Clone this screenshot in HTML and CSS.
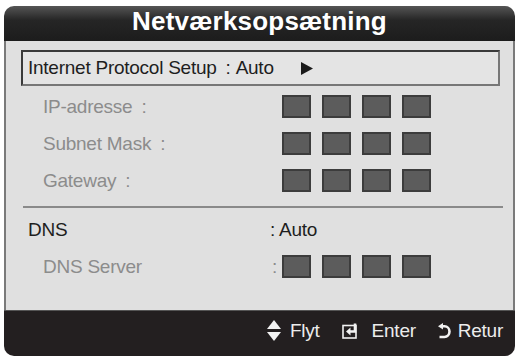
FILE: index.html
```html
<!DOCTYPE html>
<html lang="da">
<head>
    <meta charset="UTF-8">
    <meta name="viewport" content="width=device-width, initial-scale=1.0">
    <title>Netværksopsætning</title>
    <link rel="stylesheet" href="styles.css">
</head>
<body>
    <div class="panel">
        <div class="title">Netværksopsætning</div>

        <div class="content">
            <div class="setup-row">
                <span>Internet Protocol Setup</span>
                <span class="colon">:</span>
                <span class="value">Auto</span>
                <svg class="arrow" width="14" height="13" viewBox="0 0 14 13"><polygon points="1,0 13,6.5 1,13" fill="#1a1a1a"/></svg>
            </div>

            <div class="row disabled first">
                <span class="label ip-label">IP-adresse<span class="colon">:</span></span>
                <div class="boxes"><i></i><i></i><i></i><i></i></div>
            </div>
            <div class="row disabled">
                <span class="label ip-label">Subnet Mask<span class="colon">:</span></span>
                <div class="boxes"><i></i><i></i><i></i><i></i></div>
            </div>
            <div class="row disabled">
                <span class="label ip-label">Gateway<span class="colon">:</span></span>
                <div class="boxes"><i></i><i></i><i></i><i></i></div>
            </div>

            <div class="divider"></div>

            <div class="row dns">
                <span class="label dns-label">DNS</span>
                <span>: Auto</span>
            </div>
            <div class="row disabled">
                <span class="label server-label">DNS Server</span>
                <span class="server-colon">:</span>
                <div class="boxes"><i></i><i></i><i></i><i></i></div>
            </div>
        </div>

        <div class="footer">
            <div class="hint">
                <svg width="14" height="21" viewBox="0 0 14 21"><polygon points="7,0 14,9 0,9" fill="#f2f2f2"/><polygon points="0,12 14,12 7,21" fill="#f2f2f2"/></svg>
                <span class="hint-text flyt">Flyt</span>
            </div>
            <div class="hint">
                <svg width="16" height="16" viewBox="0 0 16 16"><rect x="1" y="2.5" width="13" height="12.5" fill="none" stroke="#f2f2f2" stroke-width="1.6"/><path d="M13 0.5 V8.5 H8" fill="none" stroke="#f2f2f2" stroke-width="2.6"/><polygon points="4,8.5 8.5,4.5 8.5,12.5" fill="#f2f2f2"/></svg>
                <span class="hint-text enter">Enter</span>
            </div>
            <div class="hint">
                <svg width="13" height="16" viewBox="0 0 13 16"><path d="M4 3.2 H6.5 A5 5.4 0 0 1 6.5 14 H1.5" fill="none" stroke="#f2f2f2" stroke-width="2.6"/><polygon points="0,3.2 5,0 5,6.4" fill="#f2f2f2"/></svg>
                <span class="hint-text retur">Retur</span>
            </div>
        </div>
    </div>
</body>
</html>
```

FILE: styles.css
```css
body {
    margin: 0;
    background: #ffffff;
    font-family: "Liberation Sans", Arial, sans-serif;
}
.panel {
    width: 511px;
    height: 350px;
    margin: 6px 0 0 4px;
    border-radius: 10px;
    overflow: hidden;
    display: flex;
    flex-direction: column;
}
.title {
    height: 35px;
    box-sizing: border-box;
    padding-bottom: 4px;
    background: linear-gradient(to bottom, #555 0%, #262626 40%, #1c1c1c 100%);
    color: #fff;
    font-size: 26px;
    font-weight: bold;
    letter-spacing: 0.2px;
    text-align: center;
    line-height: 31px;
}
.content {
    flex: 1;
    background: #e0e0e0;
    border-left: 2px solid #7a7a7a;
    border-right: 2px solid #7a7a7a;
    font-size: 19px;
    letter-spacing: -0.25px;
    color: #1e1e1e;
}
.setup-row {
    height: 36px;
    box-sizing: border-box;
    margin: 9px 13px 0 15px;
    border: 2px solid #3a3a3a;
    border-right-color: #777;
    border-bottom-color: #777;
    padding-left: 5px;
    display: flex;
    align-items: center;
    background: #e4e4e4;
}
.setup-row .colon {
    margin: 0 5px 0 9px;
}
.setup-row .value {
    margin-right: 26px;
}
.row {
    height: 37px;
    display: flex;
    align-items: center;
    padding-left: 37px;
}
.row.first {
    margin-top: 2px;
}
.disabled {
    color: #8c8c8c;
}
.label .colon {
    margin-left: 9px;
}
.ip-label {
    width: 239px;
}
.dns {
    padding-left: 22px;
    color: #1e1e1e;
}
.dns-label {
    width: 242px;
}
.server-label {
    width: 229px;
}
.server-colon {
    width: 10px;
}
.boxes {
    display: flex;
    gap: 11px;
}
.boxes i {
    width: 29px;
    height: 23px;
    box-sizing: border-box;
    background: #5c5c5c;
    border: 2px solid #3c3c3c;
}
.divider {
    height: 2px;
    margin: 7px 10px 3px 17px;
    background: #8a8a8a;
}
.footer {
    height: 46px;
    box-sizing: border-box;
    background: #231f20;
    border-top: 1px solid #555;
    display: flex;
    justify-content: flex-end;
    align-items: center;
    padding: 0 12px 6px 0;
    color: #ececec;
    font-size: 19px;
    letter-spacing: -0.25px;
    gap: 22px;
}
.hint {
    display: flex;
    align-items: center;
}
.hint-text.flyt {
    margin-left: 9px;
}
.hint-text.enter {
    margin-left: 14px;
}
.hint-text.retur {
    margin-left: 7px;
}
```
